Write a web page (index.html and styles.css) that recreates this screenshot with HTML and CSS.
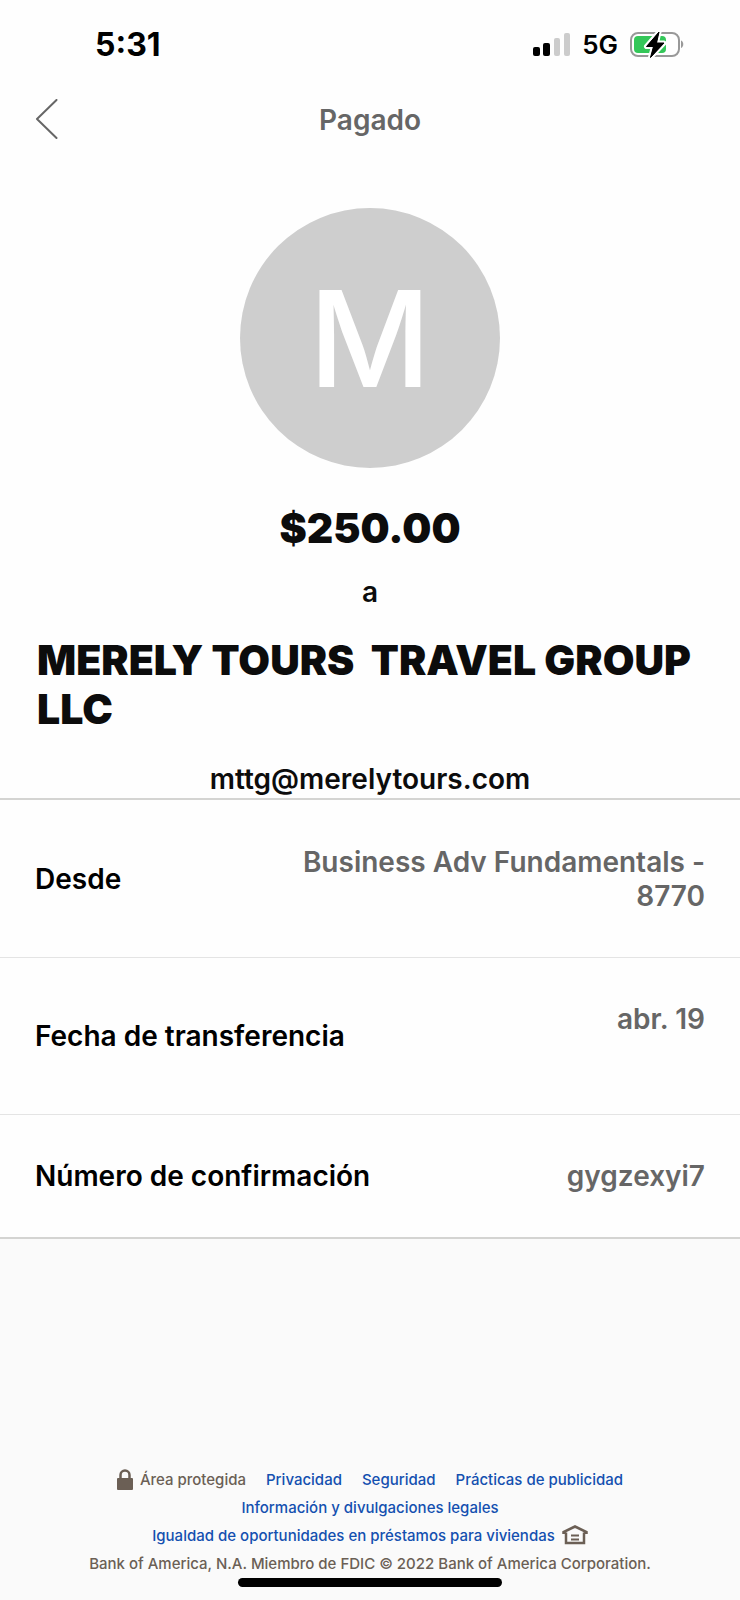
FILE: index.html
```html
<!DOCTYPE html>
<html lang="es">
<head>
    <meta charset="UTF-8">
    <meta name="viewport" content="width=device-width, initial-scale=1.0">
    <title>Pagado</title>
    <link rel="stylesheet" href="styles.css">
</head>
<body>
    <div class="status-bar">
        <span class="time">5:31</span>
        <div class="indicators">
            <svg width="38" height="24" viewBox="0 0 38 24" aria-hidden="true">
                <rect x="1" y="14" width="7" height="9" rx="2" fill="#000"/>
                <rect x="11" y="10" width="7" height="13" rx="2" fill="#000"/>
                <rect x="22" y="5" width="6" height="18" rx="2" fill="#ccc"/>
                <rect x="32" y="0" width="6" height="23" rx="2" fill="#ccc"/>
            </svg>
            <span class="network">5G</span>
            <svg width="54" height="28" viewBox="0 0 54 28" aria-hidden="true">
                <rect x="1" y="2" width="48" height="23" rx="7" fill="#fff" stroke="#999" stroke-width="2"/>
                <path d="M51 9.500c3 .8 3 6.700 0 7.500z" fill="#999"/>
                <rect x="4" y="5" width="32" height="17" rx="4" fill="#34c759"/>
                <path d="M29 1 16.500 15.500h7L20.500 26.500 34 12h-7.500z" fill="#000" stroke="#fff" stroke-width="5" stroke-linejoin="round" paint-order="stroke"/>
                <path d="M29 1 16.500 15.500h7L20.500 26.500 34 12h-7.500z" fill="#000" stroke="#000" stroke-width="1" stroke-linejoin="round"/>
            </svg>
        </div>
    </div>

    <header class="header">
        <button class="back" type="button" aria-label="Volver">
            <svg width="24" height="42" viewBox="0 0 24 42" aria-hidden="true">
                <path d="M21.500 1 2 20l19.500 19" fill="none" stroke="#666" stroke-width="2" stroke-linecap="round" stroke-linejoin="round"/>
            </svg>
        </button>
        <h1>Pagado</h1>
    </header>

    <main>
        <section class="summary">
            <div class="avatar">M</div>
            <p class="amount">$250.00</p>
            <p class="to">a</p>
            <h2 class="payee">MERELY TOURS&nbsp; TRAVEL GROUP LLC</h2>
            <p class="email">mttg@merelytours.com</p>
        </section>

        <dl class="details">
            <div class="row">
                <dt>Desde</dt>
                <dd>Business Adv Fundamentals - 8770</dd>
            </div>
            <div class="row">
                <dt>Fecha de transferencia</dt>
                <dd>abr. 19</dd>
            </div>
            <div class="row short">
                <dt>Número de confirmación</dt>
                <dd>gygzexyi7</dd>
            </div>
        </dl>
    </main>

    <footer class="footer">
        <div class="links">
            <span class="secure">
                <svg width="16" height="22" viewBox="0 0 16 22" aria-hidden="true">
                    <path d="M3.500 10V6a4.500 4.500 0 0 1 9 0v4" fill="none" stroke="#6b5f55" stroke-width="2.500"/>
                    <rect x="0" y="9" width="16" height="12" rx="1" fill="#6b5f55"/>
                </svg>
                Área protegida
            </span>
            <a href="#">Privacidad</a>
            <a href="#">Seguridad</a>
            <a href="#">Prácticas de publicidad</a>
        </div>
        <div class="links"><a href="#">Información y divulgaciones legales</a></div>
        <div class="links housing">
            <a href="#">Igualdad de oportunidades en préstamos para viviendas</a>
            <svg width="26" height="22" viewBox="0 0 26 22" aria-hidden="true">
                <path d="M1.500 9V7L13 1.500 24.500 7v2M4 7.500V18h18V7.500" fill="none" stroke="#6b5f55" stroke-width="2.500"/>
                <path d="M9 10.500h8M9 14.500h8" stroke="#6b5f55" stroke-width="2"/>
            </svg>
        </div>
        <p class="copyright">Bank of America, N.A. Miembro de FDIC © 2022 Bank of America Corporation.</p>
        <div class="home-bar"></div>
    </footer>
</body>
</html>
```
FILE: styles.css
```css
* {
    box-sizing: border-box;
}

body {
    font-family: Inter, "Liberation Sans", sans-serif;
    background-color: #fefefe;
    color: #0c0c0c;
    display: flex;
    flex-direction: column;
    min-height: 100vh;
    margin: 0;
}

h1, h2, p, dl, dd {
    margin: 0;
}

/* Status bar */
.status-bar {
    display: flex;
    justify-content: space-between;
    align-items: center;
    padding: 29px 56px 0 95px;
    color: #000;
}

.time {
    font-size: 32px;
    font-weight: 700;
    line-height: 32px;
}

.indicators {
    display: flex;
    align-items: center;
    gap: 12px;
}

.network {
    font-size: 26px;
    font-weight: 600;
    line-height: 32px;
}

/* Title bar */
.header {
    display: grid;
    grid-template-columns: 64px 1fr 64px;
    align-items: center;
    height: 80px;
    margin-top: 19px;
}

.back {
    display: flex;
    padding: 0 0 0 35px;
    border: 0;
    background: none;
}

.header h1 {
    color: #666;
    font-size: 28px;
    font-weight: 600;
    text-align: center;
}

/* Payment summary */
.summary {
    display: flex;
    flex-direction: column;
    align-items: center;
    padding: 48px 37px 0;
}

.avatar {
    display: flex;
    justify-content: center;
    align-items: center;
    width: 260px;
    height: 260px;
    border-radius: 50%;
    background-color: #cecece;
    color: #fff;
    font-size: 134px;
    font-weight: 500;
}

.amount {
    margin-top: 36px;
    font-size: 41px;
    font-weight: 900;
    line-height: 49px;
}

.to,
.email {
    font-size: 28px;
    font-weight: 600;
    line-height: 34px;
}

.to {
    margin-top: 22px;
}

.payee {
    width: 100%;
    margin-top: 27px;
    font-size: 41px;
    font-weight: 900;
    line-height: 49px;
}

.email {
    margin-top: 28px;
    margin-bottom: 2px;
}

/* Transfer details */
.details {
    border-top: 2px solid #d4d4d2;
    border-bottom: 2px solid #d4d4d2;
}

.row {
    display: flex;
    justify-content: space-between;
    align-items: center;
    gap: 24px;
    min-height: 157px;
    padding: 0 35px;
    font-size: 28px;
    font-weight: 600;
    line-height: 34px;
}

.row + .row {
    border-top: 1px solid #e4e4e4;
}

.row dt {
    color: #000;
}

.row dd {
    max-width: 420px;
    min-height: 68px;
    color: #666;
    text-align: right;
}

.row.short {
    min-height: 123px;
}

.row.short dd {
    min-height: 0;
}

/* Footer */
.footer {
    flex: 1;
    display: flex;
    flex-direction: column;
    justify-content: flex-end;
    align-items: center;
    padding: 24px 16px 13px;
    background-color: #fafafa;
    color: #6b5f55;
    font-size: 15px;
    font-weight: 500;
    line-height: 28px;
}

.links {
    display: flex;
    justify-content: center;
    gap: 20px;
}

.links a {
    color: #1450b0;
    text-decoration: none;
}

.secure,
.housing {
    display: flex;
    align-items: center;
    gap: 7px;
}

.home-bar {
    width: 264px;
    height: 9px;
    border-radius: 5px;
    background-color: #000;
}
```
